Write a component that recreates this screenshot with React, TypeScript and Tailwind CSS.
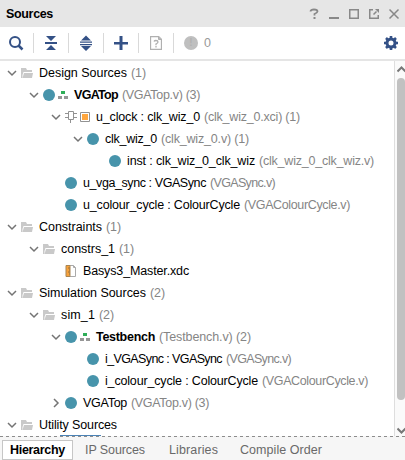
import { useLayoutEffect, useRef } from "react";

type Kind = "folder" | "module" | "top" | "ip" | "xdc";
type Row = {
  depth: number;
  arrow?: "down" | "right";
  kind: Kind;
  label: string;
  width: number;
  note?: string;
  noteWidth?: number;
};

const rows: Row[] = [
  { depth: 0, arrow: "down", kind: "folder", label: "Design Sources", width: 88, note: "(1)", noteWidth: 15 },
  { depth: 1, arrow: "down", kind: "top", label: "VGATop", width: 44, note: "(VGATop.v) (3)", noteWidth: 78 },
  { depth: 2, arrow: "down", kind: "ip", label: "u_clock : clk_wiz_0", width: 104, note: "(clk_wiz_0.xci) (1)", noteWidth: 96 },
  { depth: 3, arrow: "down", kind: "module", label: "clk_wiz_0", width: 52, note: "(clk_wiz_0.v) (1)", noteWidth: 88 },
  { depth: 4, kind: "module", label: "inst : clk_wiz_0_clk_wiz", width: 128, note: "(clk_wiz_0_clk_wiz.v)", noteWidth: 115 },
  { depth: 2, kind: "module", label: "u_vga_sync : VGASync", width: 123, note: "(VGASync.v)", noteWidth: 65 },
  { depth: 2, kind: "module", label: "u_colour_cycle : ColourCycle", width: 157, note: "(VGAColourCycle.v)", noteWidth: 106 },
  { depth: 0, arrow: "down", kind: "folder", label: "Constraints", width: 63, note: "(1)", noteWidth: 15 },
  { depth: 1, arrow: "down", kind: "folder", label: "constrs_1", width: 54, note: "(1)", noteWidth: 15 },
  { depth: 2, kind: "xdc", label: "Basys3_Master.xdc", width: 106 },
  { depth: 0, arrow: "down", kind: "folder", label: "Simulation Sources", width: 107, note: "(2)", noteWidth: 15 },
  { depth: 1, arrow: "down", kind: "folder", label: "sim_1", width: 34, note: "(2)", noteWidth: 15 },
  { depth: 2, arrow: "down", kind: "top", label: "Testbench", width: 59, note: "(Testbench.v) (2)", noteWidth: 92 },
  { depth: 3, kind: "module", label: "i_VGASync : VGASync", width: 117, note: "(VGASync.v)", noteWidth: 65 },
  { depth: 3, kind: "module", label: "i_colour_cycle : ColourCycle", width: 153, note: "(VGAColourCycle.v)", noteWidth: 106 },
  { depth: 2, arrow: "right", kind: "module", label: "VGATop", width: 44, note: "(VGATop.v) (3)", noteWidth: 78 },
  { depth: 0, arrow: "down", kind: "folder", label: "Utility Sources", width: 78 },
];

/* Text that spreads its letters evenly over a given width. */
function Fit({ text, width, className = "" }: { text: string; width: number; className?: string }) {
  const ref = useRef<HTMLSpanElement>(null);
  useLayoutEffect(() => {
    const el = ref.current;
    if (!el) return;
    el.style.letterSpacing = "0px";
    const natural = el.getBoundingClientRect().width;
    el.style.letterSpacing = `${(width - natural) / text.length}px`;
  }, [text, width]);
  return (
    <span ref={ref} className={`shrink-0 whitespace-pre ${className}`}>
      {text}
    </span>
  );
}

function Chevron({ dir }: { dir?: "down" | "right" }) {
  return (
    <svg className="w-3 h-3 shrink-0" viewBox="0 0 12 12" fill="none" stroke="#747474" strokeWidth="1.5">
      {dir === "down" && <path d="M2 4l4 4 4-4" />}
      {dir === "right" && <path d="M4 2l4 4-4 4" />}
    </svg>
  );
}

function Folder() {
  return (
    <svg className="w-3 h-3 shrink-0" viewBox="0 0 12 12">
      <path d="M0 1h5l1 2h5v2H2.500L1.500 8V11H0z" fill="#c9c9c9" />
      <path d="M3 6h9l-1 5H1.500z" fill="#c9c9c9" />
    </svg>
  );
}

function Dot() {
  return <span className="w-3 h-3 rounded-full bg-[#4794ab] shrink-0" />;
}

function NodeIcon({ kind }: { kind: Kind }) {
  if (kind === "folder") return <Folder />;
  if (kind === "module") return <Dot />;
  if (kind === "top")
    return (
      <>
        <Dot />
        <svg className="w-[10px] h-3 ml-[3px] shrink-0" viewBox="0 0 10 12" shapeRendering="crispEdges">
          <path d="M3 2h4v3H3z" fill="#2fae58" />
          <path d="M0 7h4v3H0zM6 7h4v3H6z" fill="#969696" />
        </svg>
      </>
    );
  if (kind === "ip")
    return (
      <>
        <svg className="w-3 h-3 shrink-0" viewBox="0 0 12 12" fill="none" stroke="#929292">
          <path d="M3.500.5h5v8h-5zM0 2.500h3M0 6.500h3M9 2.500h3M9 6.500h3M5.500 9v3" />
        </svg>
        <svg className="w-[10px] h-[10px] ml-[3px] shrink-0" viewBox="0 0 10 10">
          <path d="M.5.5h9v9h-9z" fill="#fff" stroke="#929292" />
          <path d="M2 2h6v6H2z" fill="#ffa63d" />
        </svg>
      </>
    );
  return (
    <svg className="w-3 h-3 shrink-0" viewBox="0 0 12 12">
      <path d="M5 .5h3.500l2 2v9H5" fill="#fff" stroke="#aaa" />
      <path d="M8.500.5v2h2" fill="none" stroke="#aaa" />
      <path d="M1 .5h4v11H1z" fill="#f7a13b" stroke="#a98552" />
      <path d="M3 3h2M4 5h1M3 7h2M4 9h1" stroke="#956f3a" />
    </svg>
  );
}

function TreeRow({ row }: { row: Row }) {
  return (
    <div className="flex h-[22px] shrink-0 items-center">
      <span className="shrink-0" style={{ width: 6 + row.depth * 22 }} />
      <Chevron dir={row.arrow} />
      <span className="w-[3px] shrink-0" />
      <NodeIcon kind={row.kind} />
      <span className="w-[6px] shrink-0" />
      <Fit text={row.label} width={row.width} className={row.kind === "top" ? "font-bold" : ""} />
      {row.note && <Fit text={row.note} width={row.noteWidth ?? 0} className="ml-1 text-[#858585]" />}
    </div>
  );
}

function Header() {
  return (
    <div className="flex h-[27px] shrink-0 items-center bg-[#e6e6e6] pl-[6px]">
      <Fit text="Sources" width={47} className="font-bold" />
      <div className="flex-1" />
      <svg className="h-[14px] w-[92px] mr-[5px] shrink-0" viewBox="308 6 92 14" fill="none" stroke="#888" strokeWidth="1.500">
        <path d="M310.500 10.500Q310.500 8.500 314 8.500Q317.500 8.500 317.500 10.500Q317.500 11.500 314.500 13V14.500" strokeWidth="1.800" />
        <path d="M313.500 16h2v2h-2z" fill="#888" stroke="none" />
        <path d="M329 17h10" strokeWidth="2" />
        <path d="M349.750 8.750h8.500v8.500h-8.500z" />
        <path d="M373 8.750h-3.250v8.500h8.500V14M373.500 13.500l3-3" />
        <path d="M375 8h4v4z" fill="#888" stroke="none" />
        <path d="M389.500 8.500l9 9M398.500 8.500l-9 9" />
      </svg>
    </div>
  );
}

function Toolbar() {
  return (
    <div className="flex h-[34px] shrink-0 items-center border-b-2 border-[#e5e5e5] bg-white">
      <svg className="ml-[8px] h-[16px] w-[16px]" viewBox="8 35 16 16" fill="none" stroke="#345186" strokeWidth="2">
        <circle cx="15" cy="42" r="5" />
        <path d="M18.500 45.500l4 4" strokeWidth="2.500" />
      </svg>
      <span className="ml-[9px] h-5 w-px bg-[#d9d9d9]" />
      <svg className="ml-[11px] h-[16px] w-[12px]" viewBox="45 35 12 16" fill="#345186">
        <path d="M46 36h10l-5 5zM45 42h12v2H45zM46 50h10l-5-5z" />
      </svg>
      <span className="ml-[11px] h-5 w-px bg-[#d9d9d9]" />
      <svg className="ml-[11px] h-[16px] w-[12px]" viewBox="80 35 12 16" fill="#345186">
        <path d="M81 40.500l5-5 5 5zM80 41.500h12v1.200H80zM80 44h12v1.200H80zM81 46h10l-5 5z" />
      </svg>
      <span className="ml-[11px] h-5 w-px bg-[#d9d9d9]" />
      <svg className="ml-[10px] h-[16px] w-[14px]" viewBox="114 35 14 16" fill="#345186">
        <path d="M114 42h5.500v-6h3v6h5.500v2.500h-5.500V50h-3v-5.500H114z" />
      </svg>
      <span className="ml-[10px] h-5 w-px bg-[#d9d9d9]" />
      <span className="ml-[11px] flex h-[14px] w-[12px]">
        <svg className="h-[14px] w-[12px]" viewBox="0 0 12 14" fill="none" stroke="#b0b0b0">
          <path d="M.5.5h8l3 3v10H.5z" strokeWidth="1.300" />
          <path d="M8.500 0v3.500H12" fill="#b9b9b9" />
          <path d="M4 5.500Q4.500 4.500 6 4.500Q8 4.500 8 6Q8 7 6 8v1.200M6 10v1.500" strokeWidth="1.300" />
        </svg>
      </span>
      <span className="ml-[11px] h-5 w-px bg-[#d9d9d9]" />
      <span className="ml-[10px] flex h-[14px] w-[14px] items-center justify-center rounded-full bg-[#bfbfbf] text-[10px] font-bold text-[#b1b1b1]">!</span>
      <span className="ml-[6px] text-[#999]">0</span>
      <span className="flex-1" />
      <svg className="mr-[7px] h-[14px] w-[14px]" viewBox="0 0 14 14" fill="none" stroke="#345186">
        <circle cx="7" cy="7" r="4" strokeWidth="3" />
        <path d="M7 0v3M7 11v3M0 7h3M11 7h3M2 2l2.200 2.200M9.800 9.800L12 12M2 12l2.200-2.200M9.800 4.200L12 2" strokeWidth="2.600" />
      </svg>
    </div>
  );
}

function ScrollBar() {
  return (
    <div className="flex w-[11px] shrink-0 flex-col border-l border-[#dedede] bg-[#fafafa] pl-[2px]">
      <svg className="h-[17px] w-2 shrink-0" viewBox="0 0 8 17" fill="none" stroke="#777" strokeWidth="2">
        <path d="M.5 10.500l4-4 4 4" />
      </svg>
      <div className="h-[322px] w-2 shrink-0 rounded-[4px] bg-[#c1c1c1]" />
      <svg className="mt-[21px] h-[14px] w-2 shrink-0" viewBox="0 0 8 14" fill="none" stroke="#777" strokeWidth="2">
        <path d="M.5 7.500l4 4 4-4" />
      </svg>
    </div>
  );
}

function Tabs() {
  return (
    <div className="flex h-[23px] shrink-0 items-start bg-[#f6f6f6] pt-[3px] text-[#696969]">
      <div className="ml-[2px] flex h-5 w-[71px] items-center border border-[#c6c6c6] bg-white pl-[7px] text-black">
        <Fit text="Hierarchy" width={55} className="font-bold" />
      </div>
      <div className="flex h-5 flex-1 items-center">
        <Fit text="IP Sources" width={60} className="ml-[12px]" />
        <Fit text="Libraries" width={49} className="ml-[24px]" />
        <Fit text="Compile Order" width={82} className="ml-[22px]" />
      </div>
    </div>
  );
}

export default function App() {
  return (
    <div className="flex h-[460px] w-[405px] flex-col overflow-hidden bg-white font-['Liberation_Sans',Arial,sans-serif] text-[12.5px] leading-[16px] text-black">
      <Header />
      <Toolbar />
      <div className="flex h-[375px] shrink-0 overflow-hidden">
        <div className="relative flex flex-1 flex-col overflow-hidden pt-px">
          {rows.map((row, i) => (
            <TreeRow key={i} row={row} />
          ))}
          <span className="absolute bottom-0 left-[60px] h-px w-[41px] bg-[#4c83b6]" />
        </div>
        <ScrollBar />
      </div>
      <div className="h-px shrink-0 bg-[repeating-linear-gradient(90deg,#8c8c8c_0_3px,#f6f6f6_3px_6px)]" />
      <Tabs />
    </div>
  );
}
